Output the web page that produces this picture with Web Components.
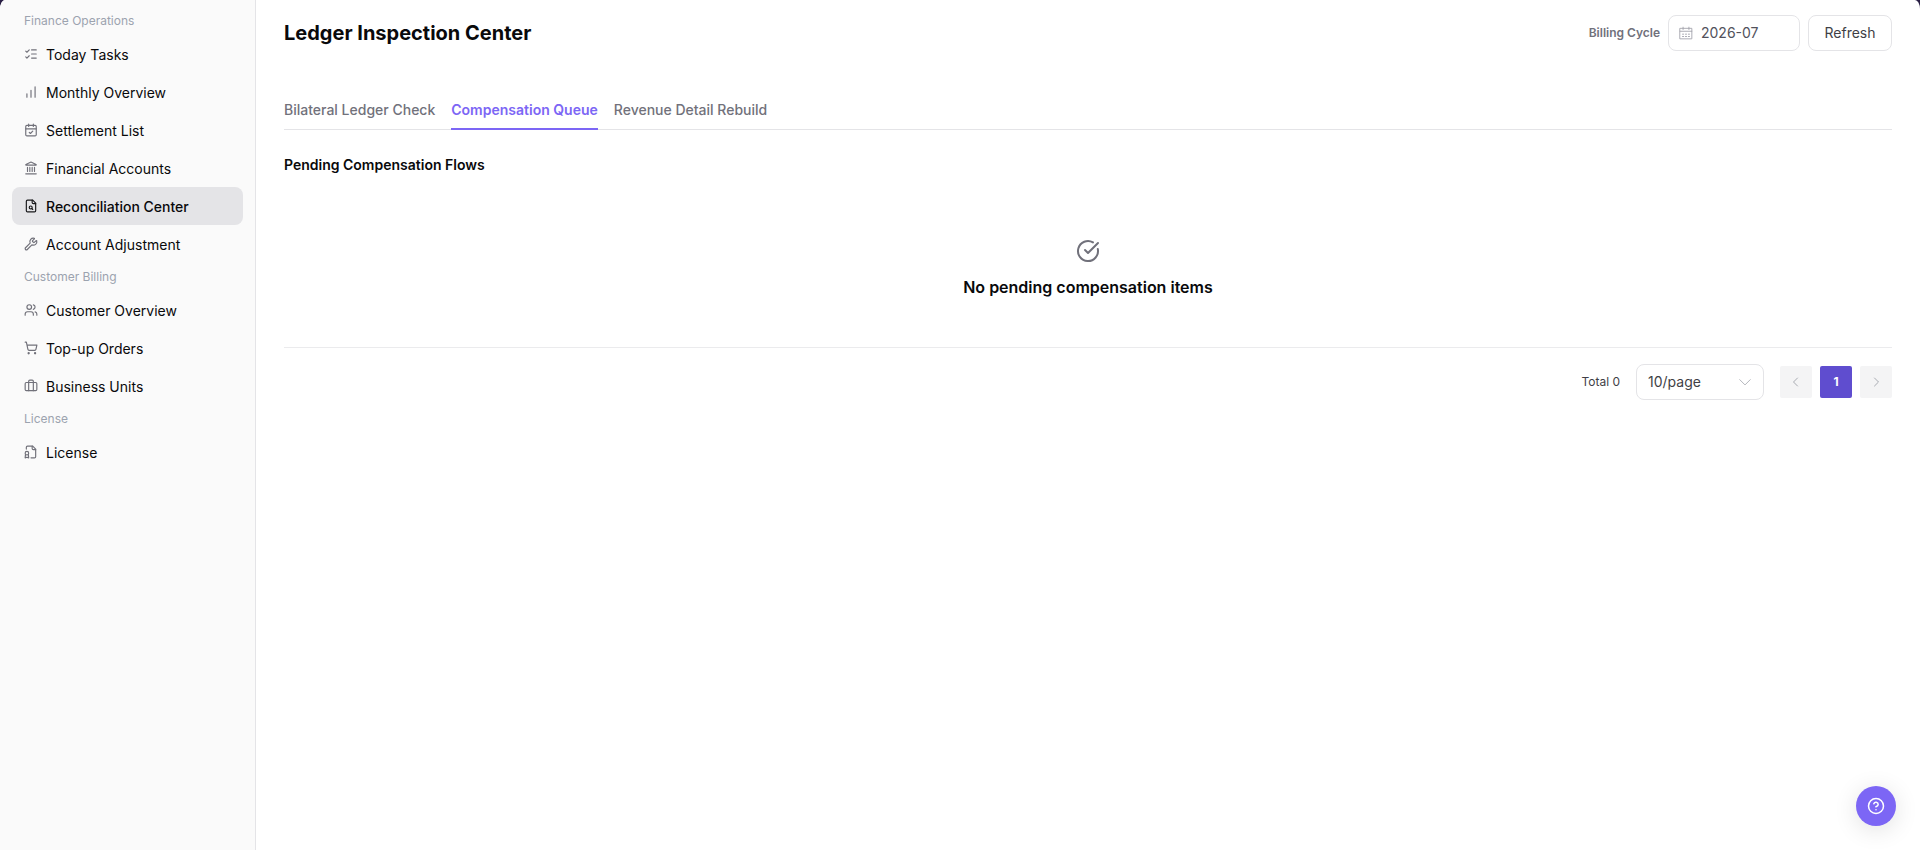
<!DOCTYPE html>
<html lang="en">
<head>
<meta charset="utf-8">
<title>Ledger Inspection Center</title>
<style>
    html, body{
        margin: 0;
        background-color: #2a1f45;
    }
    body{
        font-family: Inter, sans-serif;
        font-size: 14px;
        line-height: 20px;
        color: #09090b;
    }
</style>
</head>
<body>
<app-shell>
    <side-nav slot="nav">
        <nav-group label="Finance Operations">
            <nav-item icon="tasks">Today Tasks</nav-item>
            <nav-item icon="chart">Monthly Overview</nav-item>
            <nav-item icon="calendar">Settlement List</nav-item>
            <nav-item icon="bank">Financial Accounts</nav-item>
            <nav-item icon="search" active>Reconciliation Center</nav-item>
            <nav-item icon="wrench">Account Adjustment</nav-item>
        </nav-group>
        <nav-group label="Customer Billing">
            <nav-item icon="users">Customer Overview</nav-item>
            <nav-item icon="cart">Top-up Orders</nav-item>
            <nav-item icon="case">Business Units</nav-item>
        </nav-group>
        <nav-group label="License">
            <nav-item icon="license">License</nav-item>
        </nav-group>
    </side-nav>
    <page-header>
        Ledger Inspection Center
        <cycle-picker slot="actions" value="2026-07"></cycle-picker>
        <plain-button slot="actions">Refresh</plain-button>
    </page-header>
    <tab-bar>
        <tab-item>Bilateral Ledger Check</tab-item>
        <tab-item active>Compensation Queue</tab-item>
        <tab-item>Revenue Detail Rebuild</tab-item>
    </tab-bar>
    <queue-panel>
        <span slot="title">Pending Compensation Flows</span>
        <empty-state>No pending compensation items</empty-state>
    </queue-panel>
    <page-pager total="0"></page-pager>
    <help-button slot="floating"></help-button>
</app-shell>

<script>
const icons = {
    tasks: '<path d="M13 5h8M13 12h8M13 19h8M3 17l2 2 4-4M3 7l2 2 4-4"/>',
    chart: '<path d="M5 21v-6M12 21V9M19 21V3"/>',
    calendar: '<path d="M8 2v4M16 2v4M3 10h18M9 16l2 2 4-4"/><rect x="3" y="4" width="18" height="18" rx="2"/>',
    bank: '<path d="M10 18v-7M14 18v-7M18 18v-7M6 18v-7M3 22h18"/><path d="M11.12 2.198a2 2 0 0 1 1.76.006l7.866 3.847c.476.233.31.949-.22.949H3.474c-.53 0-.695-.716-.22-.949z"/>',
    search: '<path d="M15 2H6a2 2 0 0 0-2 2v16a2 2 0 0 0 2 2h12a2 2 0 0 0 2-2V7z"/><path d="M14 2v4a2 2 0 0 0 2 2h4M13.3 16.3 15 18"/><circle cx="11.5" cy="14.5" r="2.5"/>',
    wrench: '<path d="M14.7 6.3a1 1 0 0 0 0 1.4l1.6 1.6a1 1 0 0 0 1.4 0l3.106-3.105c.32-.322.863-.22.983.218a6 6 0 0 1-8.259 7.057l-7.91 7.91a1 1 0 0 1-2.999-3l7.91-7.91a6 6 0 0 1 7.057-8.259c.438.12.54.662.219.984z"/>',
    users: '<path d="M16 21v-2a4 4 0 0 0-4-4H6a4 4 0 0 0-4 4v2M16 3.128a4 4 0 0 1 0 7.744M22 21v-2a4 4 0 0 0-3-3.87"/><circle cx="9" cy="7" r="4"/>',
    cart: '<circle cx="8" cy="21" r="1"/><circle cx="19" cy="21" r="1"/><path d="M2.05 2.05h2l2.66 12.42a2 2 0 0 0 2 1.58h9.78a2 2 0 0 0 1.95-1.57l1.65-7.43H5.12"/>',
    case: '<path d="M16 20V4a2 2 0 0 0-2-2h-4a2 2 0 0 0-2 2v16"/><rect x="2" y="6" width="20" height="14" rx="2"/>',
    license: '<path d="M12 22h6a2 2 0 0 0 2-2V7l-5-5H6a2 2 0 0 0-2 2v3"/><path d="M14 2v4a2 2 0 0 0 2 2h4M7.5 16.5 8 22l-3-1-3 1 .5-5.5"/><circle cx="5" cy="14" r="3"/>',
    check: '<path d="M21.801 10A10 10 0 1 1 17 3.335"/><path d="m9 11 3 3L22 4"/>',
    help: '<circle cx="12" cy="12" r="10"/><path d="M9.09 9a3 3 0 0 1 5.83 1c0 2-3 3-3 3M12 17h.01"/>',
    date: '<path d="M2 4h20v18H2zM2 9h20M7 2v4M17 2v4"/><path d="M6 14h2M11 14h2M16 14h2M6 18h2M11 18h2M16 18h2"/>',
    left: '<path d="m15 4-8 8 8 8"/>',
    right: '<path d="m9 4 8 8-8 8"/>',
    down: '<path d="m3 8 9 9 9-9"/>'
};

function icon(name, size, stroke = 2) {
    return `<svg width="${size}" height="${size}" viewBox="0 0 24 24" fill="none" stroke="currentColor" stroke-width="${stroke}" stroke-linecap="round" stroke-linejoin="round" aria-hidden="true">${icons[name]}</svg>`;
}

// Registers an element whose shadow root is filled from render(host)
function define(tag, render) {
    customElements.define(tag, class extends HTMLElement {
        constructor() {
            super();
            this.attachShadow({ mode: 'open' });
        }

        connectedCallback() {
            const template = document.createElement('template');
            template.innerHTML = render(this);
            this.shadowRoot.replaceChildren(template.content.cloneNode(true));
        }
    });
}

define('app-shell', () => /*html*/`
    <style>
        :host{
            display: flex;
            min-height: 100vh;
            background-color: #fff;
            border-radius: 5px 5px 0 0 / 9px 9px 0 0;
            overflow: hidden;
        }
        main{
            flex: 1;
            min-width: 0;
            padding: 15px 28px;
        }
    </style>
    <slot name="nav"></slot>
    <main><slot></slot></main>
    <slot name="floating"></slot>
`);

define('side-nav', () => /*html*/`
    <style>
        :host{
            display: block;
            box-sizing: border-box;
            width: 256px;
            flex: none;
            padding: 7px 12px;
            background-color: #fafafa;
            border-right: 1px solid #e4e4e7;
        }
    </style>
    <nav><slot></slot></nav>
`);

define('nav-group', host => /*html*/`
    <style>
        :host{
            display: block;
        }
        .label{
            padding: 6px 12px;
            font-size: 12px;
            line-height: 16px;
            color: #9ca3af;
        }
    </style>
    <div class="label">${host.getAttribute('label')}</div>
    <slot></slot>
`);

define('nav-item', host => /*html*/`
    <style>
        :host{
            display: block;
        }
        a{
            display: flex;
            align-items: center;
            gap: 8px;
            box-sizing: border-box;
            height: 38px;
            padding: 2px 12px 0;
            border-radius: 8px;
            color: inherit;
            text-decoration: none;
        }
        svg{
            color: #71717a;
            padding-bottom: 2px;
        }
        :host([active]) a{
            background-color: #e4e4e7;
            font-weight: 500;
        }
        :host([active]) svg{
            color: #18181b;
        }
    </style>
    <a href="#">${icon(host.getAttribute('icon'), 14)}<slot></slot></a>
`);

define('page-header', () => /*html*/`
    <style>
        :host{
            display: flex;
            align-items: center;
            justify-content: space-between;
        }
        h1{
            margin: 0;
            font-size: 20px;
            line-height: 28px;
            font-weight: 700;
        }
        .actions{
            display: flex;
            align-items: center;
            gap: 8px;
        }
    </style>
    <h1><slot></slot></h1>
    <div class="actions"><slot name="actions"></slot></div>
`);

define('cycle-picker', host => /*html*/`
    <style>
        :host{
            display: flex;
            align-items: center;
            gap: 8px;
        }
        label{
            font-size: 12px;
            font-weight: 600;
            color: #71717b;
        }
        .field{
            display: flex;
            align-items: center;
            gap: 8px;
            box-sizing: border-box;
            width: 132px;
            height: 36px;
            padding: 0 10px;
            border: 1px solid #e4e4e7;
            border-radius: 8px;
        }
        svg{
            flex: none;
            color: #a1a1aa;
        }
        input{
            flex: 1;
            min-width: 0;
            padding: 0;
            border: 0;
            outline: 0;
            background: none;
            font: inherit;
            color: #52525c;
        }
    </style>
    <label for="cycle">Billing Cycle</label>
    <div class="field">${icon('date', 14, 1.5)}<input id="cycle" type="text" value="${host.getAttribute('value')}"></div>
`);

define('plain-button', () => /*html*/`
    <style>
        :host{
            display: block;
        }
        button{
            min-width: 84px;
            height: 36px;
            padding: 0 15px;
            border: 1px solid #e4e4e7;
            border-radius: 8px;
            background-color: #fff;
            font: inherit;
            color: #3f3f46;
            cursor: pointer;
        }
    </style>
    <button type="button"><slot></slot></button>
`);

define('tab-bar', () => /*html*/`
    <style>
        :host{
            display: flex;
            gap: 16px;
            margin-top: 40px;
            border-bottom: 1px solid #e4e4e7;
        }
    </style>
    <slot></slot>
`);

define('tab-item', () => /*html*/`
    <style>
        :host{
            display: block;
            margin-bottom: -1px;
        }
        button{
            padding: 9px 0 8px;
            border: 0;
            border-bottom: 2px solid transparent;
            background: none;
            font: inherit;
            font-weight: 500;
            color: #71717b;
            cursor: pointer;
        }
        :host([active]) button{
            border-color: #7c66f5;
            font-weight: 600;
            color: #7c66f5;
        }
    </style>
    <button type="button"><slot></slot></button>
`);

define('queue-panel', () => /*html*/`
    <style>
        :host{
            display: block;
            padding-top: 25px;
            border-bottom: 1px solid #ebebed;
        }
        h2{
            margin: 0;
            font-size: 14px;
            line-height: 20px;
            font-weight: 600;
        }
    </style>
    <h2><slot name="title"></slot></h2>
    <slot></slot>
`);

define('empty-state', () => /*html*/`
    <style>
        :host{
            display: flex;
            flex-direction: column;
            align-items: center;
            gap: 12px;
            padding: 64px 0 48px;
        }
        svg{
            color: #71717b;
        }
        p{
            margin: 0;
            font-size: 16px;
            line-height: 24px;
            font-weight: 600;
        }
    </style>
    ${icon('check', 24)}
    <p><slot></slot></p>
`);

define('page-pager', host => /*html*/`
    <style>
        :host{
            display: flex;
            align-items: center;
            justify-content: flex-end;
            gap: 16px;
            padding-top: 16px;
        }
        .total{
            font-size: 12px;
            color: #3f3f46;
        }
        .size{
            display: grid;
            align-items: center;
            width: 128px;
        }
        select, .size svg{
            grid-area: 1 / 1;
        }
        select{
            appearance: none;
            height: 36px;
            padding: 0 11px;
            border: 1px solid #e4e4e7;
            border-radius: 8px;
            background-color: #fff;
            font: inherit;
            color: #3f3f46;
        }
        .size svg{
            justify-self: end;
            margin-right: 12px;
            color: #a8abb2;
            pointer-events: none;
        }
        .pages{
            display: flex;
            gap: 8px;
        }
        button{
            display: flex;
            align-items: center;
            justify-content: center;
            width: 32px;
            height: 32px;
            padding: 0;
            border: 0;
            border-radius: 2px;
            background-color: #f4f4f5;
            font: inherit;
            font-size: 12px;
            color: #a8abb2;
        }
        button.current{
            background-color: #5f4dcf;
            font-weight: 700;
            color: #fff;
        }
    </style>
    <span class="total">Total ${host.getAttribute('total')}</span>
    <div class="size">
        <select aria-label="Page size">
            <option>10/page</option>
            <option>20/page</option>
            <option>50/page</option>
        </select>
        ${icon('down', 14, 1.5)}
    </div>
    <div class="pages">
        <button type="button" aria-label="Previous page" disabled>${icon('left', 12)}</button>
        <button type="button" class="current">1</button>
        <button type="button" aria-label="Next page" disabled>${icon('right', 12)}</button>
    </div>
`);

define('help-button', () => /*html*/`
    <style>
        :host{
            position: fixed;
            right: 24px;
            bottom: 24px;
        }
        button{
            display: flex;
            align-items: center;
            justify-content: center;
            width: 40px;
            height: 40px;
            padding: 0;
            border: 0;
            border-radius: 50%;
            background-color: #7c66f5;
            box-shadow: 0 4px 24px rgba(0, 0, 0, .12);
            color: #fff;
            cursor: pointer;
        }
    </style>
    <button type="button" aria-label="Help">${icon('help', 18)}</button>
`);
</script>
</body>
</html>
